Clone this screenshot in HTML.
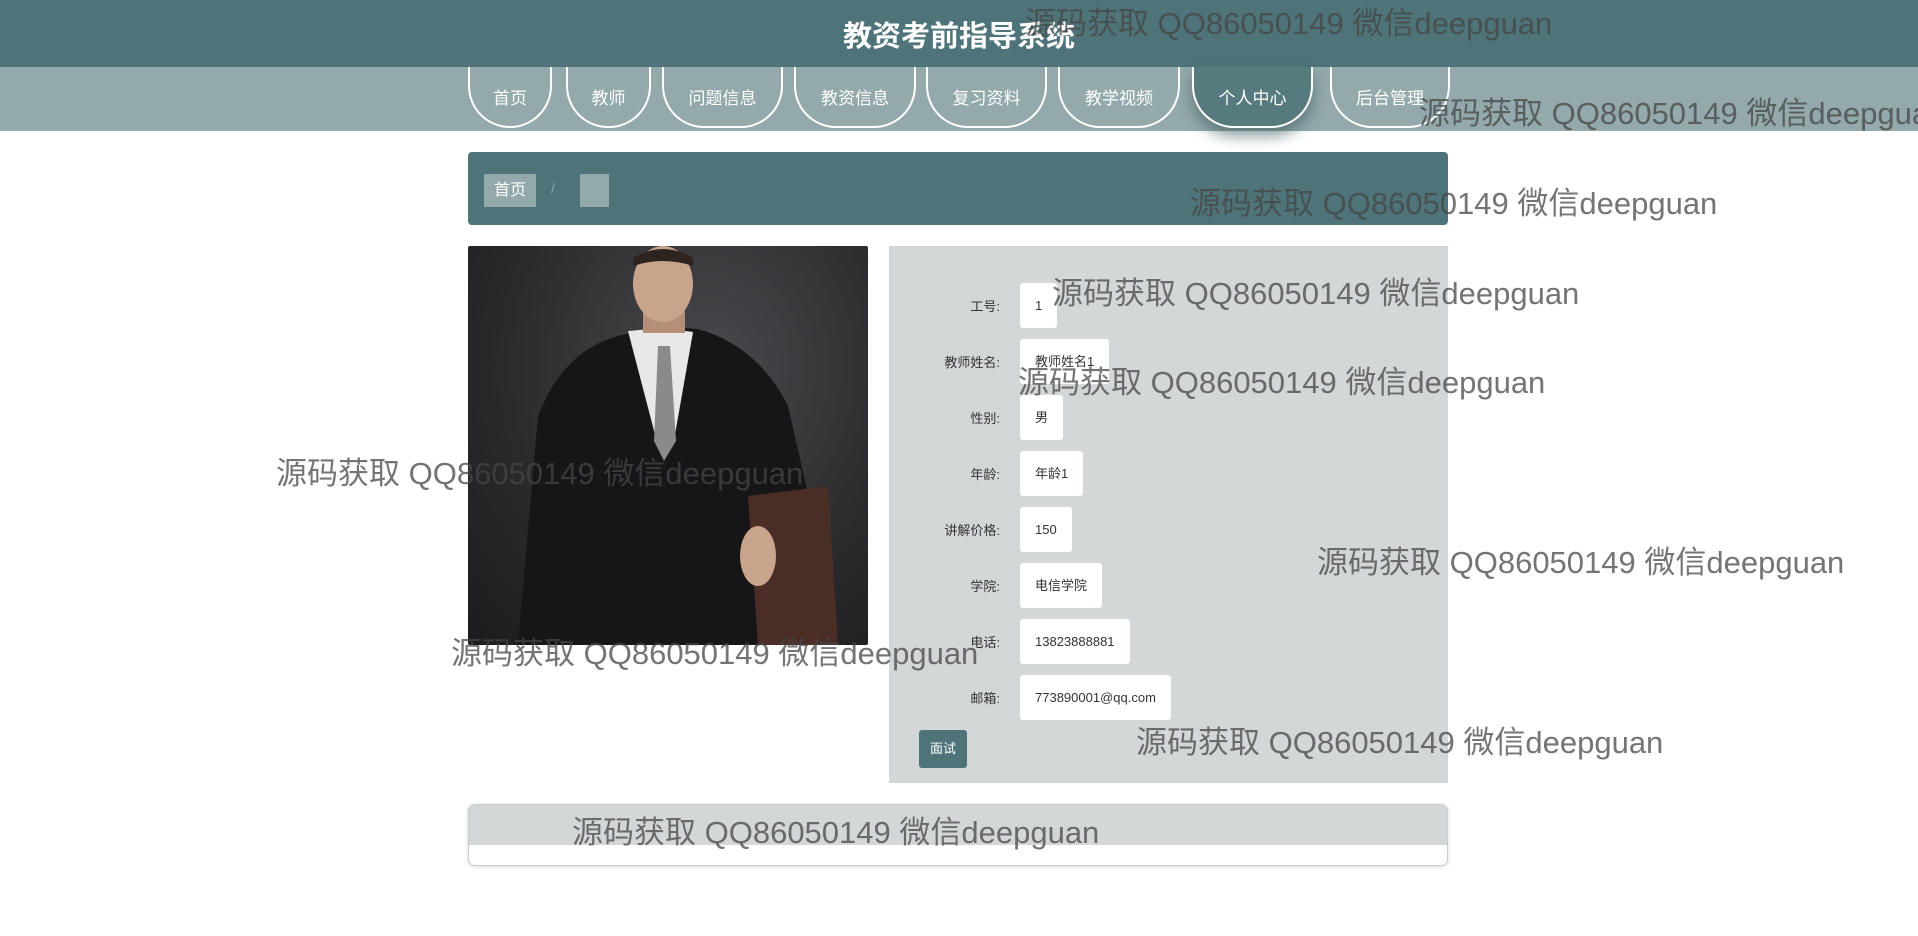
<!DOCTYPE html>
<html><head><meta charset="utf-8"><style>
*{margin:0;padding:0;box-sizing:border-box}
body{width:1918px;height:936px;overflow:hidden;background:#fff;position:relative;font-family:"Liberation Sans","Noto Sans CJK SC",sans-serif;}
.hdr{position:absolute;left:0;top:0;width:1918px;height:67px;background:#4e7479;box-shadow:0 2px 4px rgba(0,0,0,.2)}
.title{position:absolute;left:0;width:1918px;top:13px;text-align:center;color:#fff;font-size:29px;font-weight:bold}
.nav{position:absolute;left:0;top:67px;width:1918px;height:64px;background:#93a9ab}
.ni{position:absolute;top:67px;height:61px;border:2px solid #fff;border-top:none;border-radius:0 0 42px 42px;color:#fff;font-size:17px;text-align:center;line-height:64px}
.ni.act{background:#577a7e;box-shadow:0 8px 14px rgba(60,90,95,.6)}
.bc{position:absolute;left:468px;top:152px;width:980px;height:73px;background:#4e7479;border-radius:4px}
.bc1{position:absolute;left:484px;top:174px;width:52px;height:33px;background:#93a9ab;color:#fff;font-size:16px;line-height:33px;text-align:center}
.bc2{position:absolute;left:580px;top:174px;width:29px;height:33px;background:#93a9ab}
.sl{position:absolute;left:551px;top:180px;color:#8aa;font-size:14px}
.photo{position:absolute;left:468px;top:246px;width:400px;height:399px;background:radial-gradient(ellipse at 60% 30%,#4a4a4e,#2a2a2d 60%,#1c1c1e);overflow:hidden;border-radius:2px}
.panel{position:absolute;left:889px;top:246px;width:559px;height:537px;background:#d3d7d7}
.lb{position:absolute;right:918px;width:120px;text-align:right;font-size:13px;color:#333}
.vb{position:absolute;left:1020px;height:45px;background:#fff;border-radius:3px;font-size:13px;color:#333;line-height:45px;padding:0 15px;white-space:nowrap}
.btn{position:absolute;left:919px;top:730px;width:48px;height:38px;background:#4e7479;border-radius:3px;color:#fff;font-size:13px;line-height:38px;text-align:center}
.card{position:absolute;left:468px;top:804px;width:980px;height:62px;border:1px solid #ccc;border-radius:7px;overflow:hidden;box-shadow:0 1px 4px rgba(0,0,0,.15);background:#fff}
.card div{height:40px;background:#d3d7d7}
.wm{position:absolute;font-size:31px;color:rgba(70,70,70,.75);white-space:nowrap;font-family:"Liberation Sans","Noto Sans CJK SC",sans-serif}
</style></head><body>
<div class="hdr"><div class="title">教资考前指导系统</div></div>
<div class="nav"></div>
<div class="ni" style="left:468px;width:84px">首页</div>
<div class="ni" style="left:566px;width:85px">教师</div>
<div class="ni" style="left:662px;width:121px">问题信息</div>
<div class="ni" style="left:794px;width:122px">教资信息</div>
<div class="ni" style="left:926px;width:121px">复习资料</div>
<div class="ni" style="left:1058px;width:122px">教学视频</div>
<div class="ni act" style="left:1192px;width:121px">个人中心</div>
<div class="ni" style="left:1330px;width:120px">后台管理</div>

<div class="bc"></div>
<div class="bc1">首页</div><div class="sl">/</div><div class="bc2"></div>

<div class="photo">
<svg width="400" height="399" viewBox="0 0 400 399">
<path d="M50 399 L70 170 Q95 105 150 90 L190 80 L230 83 Q290 100 320 160 L345 270 L330 399 Z" fill="#161618"/>
<path d="M160 85 L195 82 L225 86 L205 200 L190 200 Z" fill="#e8e8ea"/>
<path d="M190 100 L202 100 L208 195 L196 215 L186 195 Z" fill="#8a8a8c"/>
<rect x="175" y="45" width="42" height="42" fill="#b58f78"/>
<ellipse cx="195" cy="38" rx="30" ry="38" fill="#c9a48c"/>
<path d="M165 12 Q195 -6 225 12 L225 20 Q195 10 165 20 Z" fill="#2d2420"/>
<path d="M280 250 L360 240 L370 399 L290 399 Z" fill="#4a2e26"/>
<ellipse cx="290" cy="310" rx="18" ry="30" fill="#c9a48c"/>
</svg>
</div>

<div class="panel"></div>
<div class="lb" style="top:296px">工号:</div><div class="vb" style="top:283px">1</div>
<div class="lb" style="top:352px">教师姓名:</div><div class="vb" style="top:339px">教师姓名1</div>
<div class="lb" style="top:408px">性别:</div><div class="vb" style="top:395px">男</div>
<div class="lb" style="top:464px">年龄:</div><div class="vb" style="top:451px">年龄1</div>
<div class="lb" style="top:520px">讲解价格:</div><div class="vb" style="top:507px">150</div>
<div class="lb" style="top:576px">学院:</div><div class="vb" style="top:563px">电信学院</div>
<div class="lb" style="top:632px">电话:</div><div class="vb" style="top:619px">13823888881</div>
<div class="lb" style="top:688px">邮箱:</div><div class="vb" style="top:675px">773890001@qq.com</div>
<div class="btn">面试</div>

<div class="card"><div></div></div>

<div class="wm" style="left:1025px;top:-2px">源码获取 QQ86050149 微信deepguan</div>
<div class="wm" style="left:1419px;top:88px">源码获取 QQ86050149 微信deepguan</div>
<div class="wm" style="left:1190px;top:178px">源码获取 QQ86050149 微信deepguan</div>
<div class="wm" style="left:1052px;top:268px">源码获取 QQ86050149 微信deepguan</div>
<div class="wm" style="left:1018px;top:357px">源码获取 QQ86050149 微信deepguan</div>
<div class="wm" style="left:276px;top:448px">源码获取 QQ86050149 微信deepguan</div>
<div class="wm" style="left:1317px;top:537px">源码获取 QQ86050149 微信deepguan</div>
<div class="wm" style="left:451px;top:628px">源码获取 QQ86050149 微信deepguan</div>
<div class="wm" style="left:1136px;top:717px">源码获取 QQ86050149 微信deepguan</div>
<div class="wm" style="left:572px;top:807px">源码获取 QQ86050149 微信deepguan</div>
</body></html>
